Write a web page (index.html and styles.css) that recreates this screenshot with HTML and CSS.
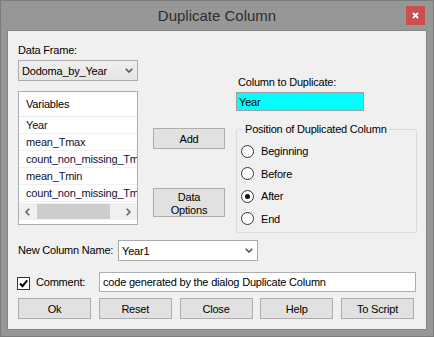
FILE: index.html
```html
<!DOCTYPE html>
<html>
<head>
<meta charset="utf-8">
<link rel="stylesheet" href="styles.css">
</head>
<body>
<div class="window">
  <div class="titlebar">
    <span class="title">Duplicate Column</span>
    <span class="close"><svg width="7" height="7" viewBox="0 0 7 7"><path d="M1 1 L6 6 M6 1 L1 6" stroke="#fff" stroke-width="1.8"/></svg></span>
  </div>
  <div class="client">
    <div class="top">
      <div class="col-left">
        <div class="label lbl-df">Data Frame:</div>
        <div class="combo combo-gray">
          <span>Dodoma_by_Year</span>
          <svg class="chev" width="8" height="5" viewBox="0 0 8 5"><polyline points="0.7,0.7 4,4 7.3,0.7" fill="none" stroke="#555" stroke-width="1.6"/></svg>
        </div>
        <div class="listbox">
          <div class="lb-header">Variables</div>
          <div class="lb-row">Year</div>
          <div class="lb-row">mean_Tmax</div>
          <div class="lb-row">count_non_missing_Tmax</div>
          <div class="lb-row">mean_Tmin</div>
          <div class="lb-row">count_non_missing_Tmin</div>
          <div class="hscroll">
            <span class="sb-btn"><svg width="5" height="8" viewBox="0 0 5 8"><polyline points="4.2,0.7 1,4 4.2,7.3" fill="none" stroke="#606060" stroke-width="1.6"/></svg></span>
            <span class="sb-thumb"></span>
            <span class="sb-btn sb-right"><svg width="5" height="8" viewBox="0 0 5 8"><polyline points="0.8,0.7 4,4 0.8,7.3" fill="none" stroke="#606060" stroke-width="1.6"/></svg></span>
          </div>
        </div>
      </div>
      <div class="col-mid">
        <div class="btn btn-add">Add</div>
        <div class="btn btn-tall">Data<br>Options</div>
      </div>
      <div class="col-right">
        <div class="label lbl-col">Column to Duplicate:</div>
        <div class="textbox cyan">Year</div>
        <div class="group">
          <div class="legend">Position of Duplicated Column</div>
          <div class="radios">
            <div class="radio"><span class="circle"></span>Beginning</div>
            <div class="radio"><span class="circle"></span>Before</div>
            <div class="radio"><span class="circle checked"><span class="dot"></span></span>After</div>
            <div class="radio"><span class="circle"></span>End</div>
          </div>
        </div>
      </div>
    </div>
    <div class="row row-newcol">
      <span class="label lbl-new">New Column Name:</span>
      <div class="combo combo-white">
        <span>Year1</span>
        <svg class="chev" width="8" height="5" viewBox="0 0 8 5"><polyline points="0.7,0.7 4,4 7.3,0.7" fill="none" stroke="#555" stroke-width="1.6"/></svg>
      </div>
    </div>
    <div class="row row-comment">
      <span class="checkbox"><svg width="11" height="11" viewBox="0 0 11 11"><polyline points="2,5.5 4.5,8.2 9.2,2.3" fill="none" stroke="#000" stroke-width="1.9"/></svg></span>
      <span class="label lbl-comment">Comment:</span>
      <div class="textbox comment-box">code generated by the dialog Duplicate Column</div>
    </div>
    <div class="row row-buttons">
      <div class="btn btn-foot">Ok</div>
      <div class="btn btn-foot">Reset</div>
      <div class="btn btn-foot">Close</div>
      <div class="btn btn-foot">Help</div>
      <div class="btn btn-foot">To Script</div>
    </div>
  </div>
</div>
</body>
</html>
```
FILE: styles.css
```css
html, body {
  margin: 0;
  padding: 0;
}
body {
  font-family: "Liberation Sans", Arial, sans-serif;
  font-size: 11px;
  letter-spacing: -0.2px;
  color: #000;
}
.window {
  width: 434px;
  height: 337px;
  box-sizing: border-box;
  border: 1px solid #7c7c7c;
  background: #979797;
  padding: 0 6px 6px 6px;
  display: flex;
  flex-direction: column;
}
.titlebar {
  height: 29px;
  flex: none;
  display: grid;
  grid-template-columns: 1fr auto 1fr;
}
.title {
  grid-column: 2;
  font-size: 15px;
  letter-spacing: 0;
  line-height: 29px;
  color: #2e2e2e;
}
.close {
  grid-column: 3;
  justify-self: end;
  align-self: start;
  width: 19px;
  height: 19px;
  margin-top: 5px;
  margin-right: 2px;
  background: #c75050;
  display: flex;
  align-items: center;
  justify-content: center;
}
.client {
  flex: 1;
  background: #f0f0f0;
  border: 1px solid #858585;
  padding-left: 10px;
}
.top {
  display: flex;
  align-items: flex-start;
}
.label {
  line-height: 13px;
  white-space: nowrap;
}
.col-left {
  width: 120px;
  display: flex;
  flex-direction: column;
}
.lbl-df {
  margin-top: 13px;
}
.combo {
  height: 21px;
  box-sizing: border-box;
  border: 1px solid #acacac;
  display: flex;
  align-items: center;
  padding-left: 3px;
}
.combo-gray {
  margin-top: 3px;
  background: linear-gradient(#efefef, #e5e5e5);
}
.combo-white {
  width: 140px;
  background: #fff;
  border-color: #a9a9a9;
}
.chev {
  margin-left: auto;
  margin-right: 4px;
}
.listbox {
  margin-top: 10px;
  height: 134px;
  box-sizing: border-box;
  border: 1px solid #abadb3;
  background: #fff;
  overflow: hidden;
  display: flex;
  flex-direction: column;
}
.lb-header {
  height: 24px;
  flex: none;
  border-bottom: 1px solid #e5e9ee;
  padding-left: 7px;
  display: flex;
  align-items: center;
  white-space: nowrap;
}
.lb-row {
  height: 16px;
  flex: none;
  line-height: 16px;
  border-bottom: 1px solid #f0f0f0;
  padding-left: 7px;
  white-space: nowrap;
  color: #10103a;
}
.hscroll {
  margin-top: 1px;
  height: 17px;
  flex: none;
  background: #f0f0f0;
  display: flex;
  align-items: center;
}
.sb-btn {
  width: 17px;
  height: 17px;
  display: flex;
  align-items: center;
  justify-content: center;
}
.sb-thumb {
  width: 73px;
  height: 15px;
  margin-left: 1px;
  background: #cdcdcd;
}
.sb-right {
  margin-left: auto;
}
.col-mid {
  width: 72px;
  margin-left: 15px;
  display: flex;
  flex-direction: column;
}
.btn {
  box-sizing: border-box;
  border: 1px solid #adadad;
  background: #e1e1e1;
  display: flex;
  align-items: center;
  justify-content: center;
  text-align: center;
  white-space: nowrap;
}
.btn-add {
  margin-top: 97px;
  height: 21px;
}
.btn-tall {
  margin-top: 39px;
  height: 29px;
  line-height: 13px;
  align-items: flex-start;
  padding-top: 2px;
}
.col-right {
  width: 181px;
  margin-left: 11px;
  display: flex;
  flex-direction: column;
}
.lbl-col {
  margin-top: 45px;
  padding-left: 2px;
}
.textbox {
  box-sizing: border-box;
  border: 1px solid #abadb3;
  background: #fff;
  display: flex;
  align-items: center;
  padding-left: 2px;
  white-space: nowrap;
}
.cyan {
  margin-top: 3px;
  width: 128px;
  height: 19px;
  background: #00ffff;
  border-color: #a0a0a0;
}
.group {
  margin-top: 18px;
  height: 104px;
  box-sizing: border-box;
  border: 1px solid #dcdcdc;
  border-radius: 2px;
}
.legend {
  margin: -7px 0 0 6px;
  padding: 0 2px;
  width: fit-content;
  line-height: 13px;
  background: #f0f0f0;
  white-space: nowrap;
}
.radios {
  padding-top: 4px;
}
.radio {
  height: 22.5px;
  display: flex;
  align-items: center;
  padding-left: 4px;
}
.circle {
  width: 13px;
  height: 13px;
  box-sizing: border-box;
  border: 1px solid #333;
  border-radius: 50%;
  background: #fff;
  margin-right: 7px;
  display: flex;
  align-items: center;
  justify-content: center;
}
.dot {
  width: 5px;
  height: 5px;
  border-radius: 50%;
  background: #111;
}
.row {
  display: flex;
  align-items: center;
}
.row-newcol {
  margin-top: 7px;
}
.lbl-new {
  width: 100px;
}
.row-comment {
  margin-top: 11px;
}
.checkbox {
  width: 13px;
  height: 13px;
  box-sizing: border-box;
  border: 1px solid #333;
  background: #fff;
  margin-left: -1px;
  margin-top: 2px;
  display: flex;
  align-items: center;
  justify-content: center;
}
.lbl-comment {
  margin-left: 6px;
  width: 63px;
}
.comment-box {
  width: 317px;
  height: 20px;
  padding-left: 3px;
}
.row-buttons {
  margin-top: 6px;
  gap: 7.75px;
}
.btn-foot {
  width: 73px;
  height: 21px;
}
```
